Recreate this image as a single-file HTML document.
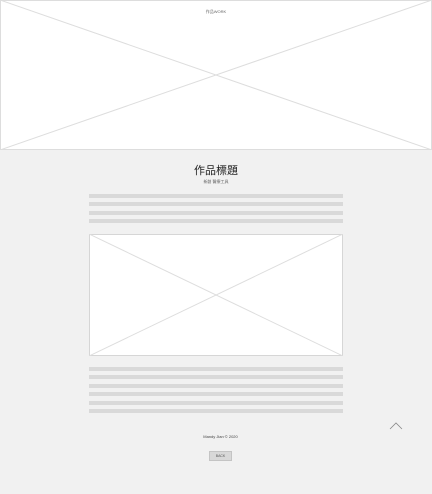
<!DOCTYPE html>
<html><head><meta charset="utf-8"><style>
html,body{margin:0;padding:0;}
body{width:432px;height:494px;background:#f1f1f1;position:relative;overflow:hidden;font-family:"Liberation Sans","Noto Sans CJK TC",sans-serif;}
.a{position:absolute;}
.bar{position:absolute;left:89px;width:254px;height:4px;background:#d9d9d9;}
</style></head><body>
<div class="a" style="left:0;top:0;width:432px;height:150px;background:#fff;">
<svg width="432" height="150" style="position:absolute;left:0;top:0"><line x1="0" y1="0" x2="432" y2="150" stroke="#ddd"/><line x1="432" y1="0" x2="0" y2="150" stroke="#ddd"/><rect x="0.5" y="0.5" width="431" height="149" fill="none" stroke="#ddd"/></svg>
</div>
<div class="a" style="left:0;width:432px;top:9px;text-align:center;font-size:4px;color:#666;line-height:6px;">作品WORK</div>
<div class="a" style="left:0;width:432px;top:164px;text-align:center;font-size:11px;color:#222;line-height:14px;">作品標題</div>
<div class="a" style="left:0;width:432px;top:179px;text-align:center;font-size:4px;color:#666;line-height:5px;">新創 醫療工具</div>
<div class="bar" style="top:194px"></div>
<div class="bar" style="top:202px"></div>
<div class="bar" style="top:211px"></div>
<div class="bar" style="top:219px"></div>
<svg class="a" style="left:89px;top:234px" width="254" height="122"><rect x="0.5" y="0.5" width="253" height="121" fill="#fff" stroke="#d6d6d6"/><line x1="0" y1="0" x2="254" y2="122" stroke="#ddd"/><line x1="254" y1="0" x2="0" y2="122" stroke="#ddd"/></svg>
<div class="bar" style="top:367px"></div>
<div class="bar" style="top:375px"></div>
<div class="bar" style="top:384px"></div>
<div class="bar" style="top:392px"></div>
<div class="bar" style="top:401px"></div>
<div class="bar" style="top:409px"></div>
<div class="a" style="left:0;width:441px;top:434px;text-align:center;font-size:4px;color:#444;line-height:5px;">Mandy Jian © 2020</div>
<div class="a" style="left:209px;top:451px;width:23px;height:10px;background:#d8d8d8;border:1px solid #c4c4c4;box-sizing:border-box;font-size:3.5px;color:#555;text-align:center;line-height:8px;">BACK</div>
<svg class="a" style="left:389px;top:422px" width="14" height="8"><polyline points="1,7 7,1 13,7" fill="none" stroke="#888" stroke-width="0.8"/></svg>
</body></html>
